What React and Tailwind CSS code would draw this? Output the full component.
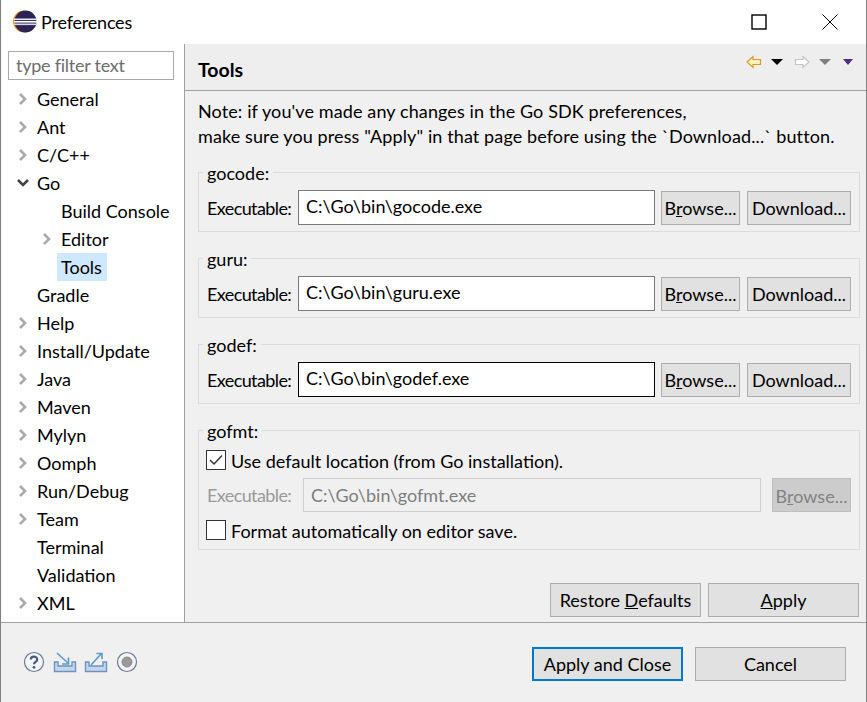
import React from "react";

const F = "font-['Lato','Open_Sans',sans-serif]";

function Chevron({ open }) {
  return open ? (
    <svg width="14" height="10" viewBox="0 0 14 10" className="block">
      <path d="M2 2 L7 7 L12 2" fill="none" stroke="#444" strokeWidth="2.6" />
    </svg>
  ) : (
    <svg width="10" height="14" viewBox="0 0 10 14" className="block">
      <path d="M2 2 L7 7 L2 12" fill="none" stroke="#aaa" strokeWidth="2.6" />
    </svg>
  );
}

function TreeRow({ label, arrow, open, indent, selected }) {
  return (
    <div className={`flex h-[28px] items-center ${indent ? "pl-[39px]" : "pl-[15px]"}`}>
      <span className="flex w-[14px] justify-center">{arrow && <Chevron open={open} />}</span>
      <span className={`flex h-[28px] items-center ${selected ? "ml-[3px] bg-[#cde8ff] pl-[4px] pr-[5px]" : "ml-[4px] px-[3px]"}`}>{label}</span>
    </div>
  );
}

function Btn({ children, className = "", disabled }) {
  return (
    <div className={`flex items-center justify-center border ${disabled ? "border-[#bfbfbf] bg-[#cccccc] text-[#838383]" : "border-[#adadad] bg-[#e1e1e1] text-black"} ${className}`}>
      {children}
    </div>
  );
}

function Group({ title, className = "", children }) {
  return (
    <div className={`relative border border-[#dcdcdc] ${className}`}>
      <span className="absolute left-[4px] top-[-12px] bg-[#f0f0f0] px-[4px] leading-[24px]">{title}</span>
      {children}
    </div>
  );
}

function ExeGroup({ title, value, mt, dark }) {
  return (
    <Group title={title} className={`h-[60px] ${mt}`}>
      <div className="flex items-center pl-[8px] pt-[17px]">
        <span className="w-[91px] pt-[2px] tracking-[-0.6px]">Executable:</span>
        <div className={`flex h-[35px] w-[357px] items-center border bg-white pb-[3px] pl-[7px] ${dark ? "border-black" : "border-[#7a7a7a]"}`}>{value}</div>
        <Btn className="ml-[6px] h-[34px] w-[79px] pt-[2px]"><span>B<u>r</u>owse...</span></Btn>
        <Btn className="ml-[7px] h-[34px] w-[104px] pt-[2px]">Download...</Btn>
      </div>
    </Group>
  );
}

function Eclipse() {
  return (
    <svg width="26" height="24" viewBox="0 0 26 24" className="block">
      <circle cx="12" cy="10.5" r="11" fill="#f29111" transform="translate(0 1)" />
      <circle cx="13.5" cy="11.5" r="11" fill="#2c2255" />
      <rect x="2" y="8.5" width="23" height="1.6" fill="#e8e8f5" />
      <rect x="2" y="11" width="23" height="1.6" fill="#fff" />
      <rect x="2" y="13.5" width="23" height="1.6" fill="#d8d8ea" />
    </svg>
  );
}

function TrayIcon({ out }) {
  return (
    <svg width="24" height="22" viewBox="0 0 24 22" className="block">
      <path d="M1.5 11 H5 V15 H19 V11 H22.5 V20.5 H1.5 Z" fill="#c4d6ea" stroke="#6d93c0" strokeWidth="1.4" />
      {out ? (
        <g fill="none" stroke="#5a9ac8" strokeWidth="1.6">
          <path d="M7 14 L17 3" />
          <path d="M12.5 2.5 H18 V8" />
        </g>
      ) : (
        <g fill="none" stroke="#5a9ac8" strokeWidth="1.6">
          <path d="M4 2 L15 12" />
          <path d="M15.5 6.5 V13 H9" />
        </g>
      )}
    </svg>
  );
}

export default function App() {
  return (
    <div className={`flex h-[702px] w-[867px] flex-col overflow-hidden border-x border-x-[#7f7f7f] bg-[#f0f0f0] text-[18px] text-black ${F}`}>
      <div className="flex h-[44px] items-center bg-white">
        <span className="ml-[11px]"><Eclipse /></span>
        <span className="ml-[3px] tracking-[-0.2px]">Preferences</span>
        <div className="ml-auto flex items-center">
          <svg width="16" height="16" viewBox="0 0 16 16" className="mr-[55px] block"><rect x="1" y="1" width="14" height="14" fill="none" stroke="#000" strokeWidth="1.4" /></svg>
          <svg width="16" height="16" viewBox="0 0 16 16" className="mr-[28px] block"><path d="M0.5 0.5 L15.5 15.5 M15.5 0.5 L0.5 15.5" stroke="#000" strokeWidth="1" /></svg>
        </div>
      </div>

      <div className="flex h-[578px]">
        <div className="w-[183px] bg-white pl-[7px]">
          <div className="mt-[7px] flex h-[29px] w-[166px] items-center border border-[#a9a9a9] pl-[7px] tracking-[-0.25px] text-[#6d6d6d]">type filter text</div>
          <div className="ml-[-7px] mt-[5px]">
            {["General", "Ant", "C/C++"].map((l) => <TreeRow key={l} label={l} arrow />)}
            <TreeRow label="Go" arrow open />
            <TreeRow label="Build Console" indent />
            <TreeRow label="Editor" arrow indent />
            <TreeRow label="Tools" indent selected />
            <TreeRow label="Gradle" />
            {["Help", "Install/Update", "Java", "Maven", "Mylyn", "Oomph", "Run/Debug", "Team"].map((l) => <TreeRow key={l} label={l} arrow />)}
            <TreeRow label="Terminal" />
            <TreeRow label="Validation" />
            <TreeRow label="XML" arrow />
          </div>
        </div>

        <div className="flex flex-1 flex-col border-l border-l-[#a0a0a0]">
          <div className="flex h-[47px] justify-between border-b border-b-[#a0a0a0] bg-[#eeeeee] pl-[13px] pr-[13px]">
            <div className="pt-[13px] text-[19.5px] font-bold leading-[26px]">Tools</div>
            <div className="flex items-start pt-[11px]">
              <svg width="16" height="14" viewBox="0 0 16 14" className="block"><path d="M1 7 L7 1.5 V4.5 H14.5 V9.5 H7 V12.5 Z" fill="#fff0b8" stroke="#d99a2b" strokeWidth="1.2" /></svg>
              <svg width="12" height="6" viewBox="0 0 12 6" className="ml-[9px] mt-[4px] block"><path d="M0 0 H12 L6 6 Z" fill="#000" /></svg>
              <svg width="16" height="14" viewBox="0 0 16 14" className="ml-[11px] block"><path d="M15 7 L9 1.5 V4.5 H1.5 V9.5 H9 V12.5 Z" fill="#fff" stroke="#c4c4c4" strokeWidth="1.2" /></svg>
              <svg width="12" height="6" viewBox="0 0 12 6" className="ml-[9px] mt-[4px] block"><path d="M0 0 H12 L6 6 Z" fill="#7f7f7f" /></svg>
              <svg width="10" height="6" viewBox="0 0 10 6" className="ml-[12px] mt-[4px] block"><path d="M0 0 H10 L5 6 Z" fill="#4b2e83" /></svg>
            </div>
          </div>

          <div className="flex flex-1 flex-col pl-[13px] pr-[6px]">
            <div className="pt-[8px] leading-[25px]">
              <div className="tracking-[0.11px]">Note: if you've made any changes in the Go SDK preferences,</div>
              <div className="tracking-[0.11px]">make sure you press "Apply" in that page before using the `Download...` button.</div>
            </div>
            <ExeGroup title="gocode:" value="C:\Go\bin\gocode.exe" mt="mt-[23px]" />
            <ExeGroup title="guru:" value="C:\Go\bin\guru.exe" mt="mt-[26px]" />
            <ExeGroup title="godef:" value="C:\Go\bin\godef.exe" mt="mt-[26px]" dark />
            <Group title="gofmt:" className="mt-[26px] h-[120px]">
              <div className="mt-[19px] flex h-[20px] items-center pl-[7px]">
                <span className="flex h-[20px] w-[20px] items-center justify-center border border-[#333333] bg-white">
                  <svg width="14" height="12" viewBox="0 0 14 12" className="block"><path d="M1 6 L5 10 L13 1.5" fill="none" stroke="#333" strokeWidth="1.5" /></svg>
                </span>
                <span className="ml-[5px] pt-[2px]">Use default location (from Go installation).</span>
              </div>
              <div className="mt-[8px] flex items-center pl-[8px]">
                <span className="w-[96px] tracking-[-0.6px] text-[#9a9a9a]">Executable:</span>
                <div className="flex h-[34px] w-[458px] items-center border border-[#cfcfcf] pl-[7px] text-[#7d7d7d]">C:\Go\bin\gofmt.exe</div>
                <Btn disabled className="ml-[11px] h-[34px] w-[79px] pt-[2px]"><span>B<u>r</u>owse...</span></Btn>
              </div>
              <div className="mt-[8px] flex h-[20px] items-center pl-[7px]">
                <span className="h-[20px] w-[20px] border border-[#333333] bg-white" />
                <span className="ml-[5px] pt-[2px]">Format automatically on editor save.</span>
              </div>
            </Group>
            <div className="mt-[33px] flex justify-end gap-[7px] pr-[1px]">
              <Btn className="h-[34px] w-[151px]"><span>Restore <u>D</u>efaults</span></Btn>
              <Btn className="h-[34px] w-[151px]"><span><u>A</u>pply</span></Btn>
            </div>
          </div>
        </div>
      </div>

      <div className="flex h-[80px] items-start border-t border-t-[#a0a0a0]">
        <div className="ml-[22px] mt-[28px] flex items-center gap-[7px]">
          <svg width="22" height="22" viewBox="0 0 22 22" className="block">
            <circle cx="11" cy="11" r="9.5" fill="#f4f6fa" stroke="#6c7a95" strokeWidth="1.2" />
            <path d="M7.8 8.5 C7.8 4.8 14.2 4.8 14.2 8.4 C14.2 10.8 11 10.8 11 13.2" fill="none" stroke="#4a5a7c" strokeWidth="2.2" />
            <circle cx="11" cy="16.3" r="1.4" fill="#4a5a7c" />
          </svg>
          <span className="ml-[1px]"><TrayIcon /></span>
          <TrayIcon out />
          <svg width="22" height="22" viewBox="0 0 22 22" className="ml-[1px] block">
            <circle cx="11" cy="11" r="9.5" fill="#f4f4f6" stroke="#6c7a95" strokeWidth="1.2" />
            <circle cx="11" cy="11" r="5" fill="#9a9a9a" stroke="#8a8a8a" />
          </svg>
        </div>
        <div className="ml-auto mr-[20px] mt-[24px] flex gap-[12px]">
          <Btn className="h-[34px] w-[151px] !border-2 !border-[#0078d7]">Apply and Close</Btn>
          <Btn className="h-[34px] w-[151px]">Cancel</Btn>
        </div>
      </div>
    </div>
  );
}
